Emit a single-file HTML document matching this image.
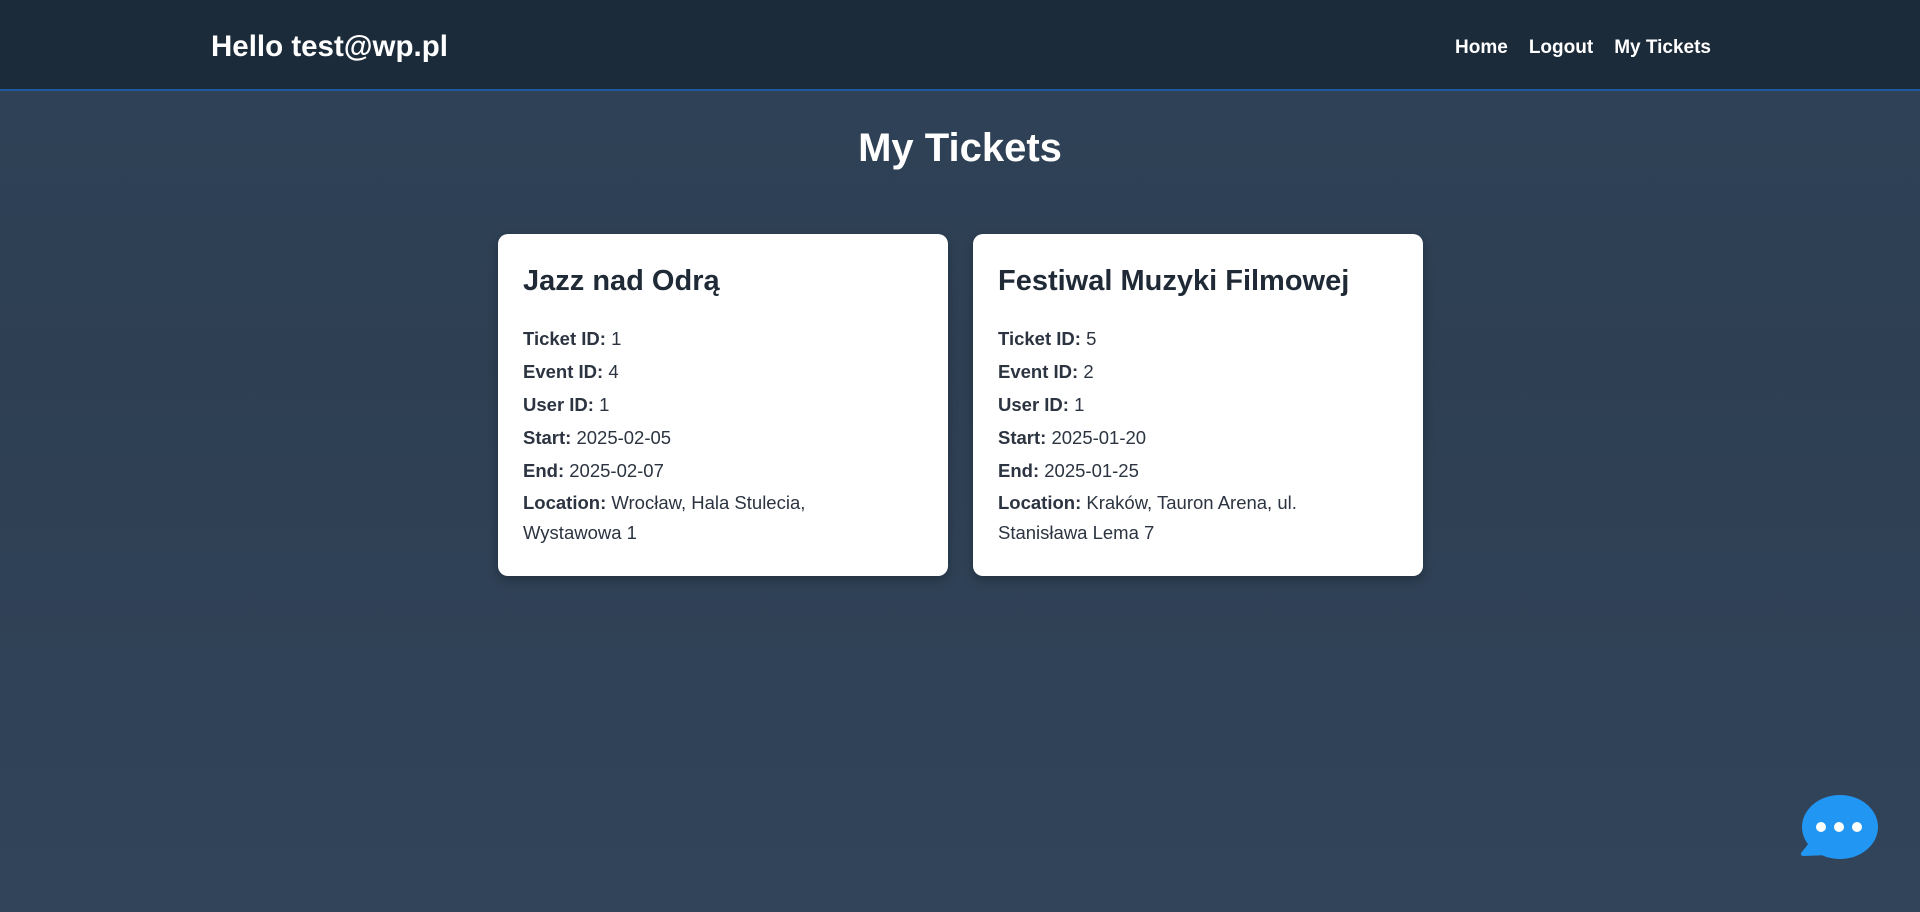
<!DOCTYPE html>
<html><head><meta charset="utf-8"><style>
*{margin:0;padding:0;box-sizing:border-box}
body{width:1920px;height:912px;overflow:hidden;font-family:"Liberation Sans",sans-serif;background:linear-gradient(180deg,#2f4257 0%,#2e3f53 40%,#31445a 100%);position:relative}
header{height:91px;background:#1c2b3a;border-bottom:2px solid #1f5aa0;position:relative}
.hello{position:absolute;left:211px;top:30px;color:#fff;font-weight:bold;font-size:29.5px}
nav{position:absolute;right:209px;top:37px;color:#fff;font-weight:bold;font-size:19px}
nav span{margin-left:21px}
h1{color:#fff;text-align:center;font-size:40px;font-weight:bold;position:absolute;top:126px;width:100%}
.card{position:absolute;top:234px;width:450px;height:342px;background:#fff;border-radius:10px;padding:31px 25px 28px;color:#2b3440;box-shadow:0 4px 10px rgba(0,0,0,.25)}
.card h2{font-size:29px;margin-bottom:24px;color:#1f2a36}
.card p{font-size:18.5px;line-height:33px}
.card p.l{line-height:30px;margin-top:1px}
.chat{position:absolute;left:1799px;top:793px}
</style></head><body>
<header><div class="hello">Hello test@wp.pl</div><nav><span>Home</span><span>Logout</span><span>My Tickets</span></nav></header>
<h1>My Tickets</h1>
<div class="card" style="left:498px"><h2>Jazz nad Odrą</h2>
<p><b>Ticket ID:</b> 1</p><p><b>Event ID:</b> 4</p><p><b>User ID:</b> 1</p><p><b>Start:</b> 2025-02-05</p><p><b>End:</b> 2025-02-07</p><p class="l"><b>Location:</b> Wrocław, Hala Stulecia,<br>Wystawowa 1</p></div>
<div class="card" style="left:973px"><h2>Festiwal Muzyki Filmowej</h2>
<p><b>Ticket ID:</b> 5</p><p><b>Event ID:</b> 2</p><p><b>User ID:</b> 1</p><p><b>Start:</b> 2025-01-20</p><p><b>End:</b> 2025-01-25</p><p class="l"><b>Location:</b> Kraków, Tauron Arena, ul.<br>Stanisława Lema 7</p></div>
<svg class="chat" width="80" height="70" viewBox="0 0 80 70"><ellipse cx="41" cy="34" rx="38" ry="32" fill="#2196f3"/><path d="M10 50 L2 60 Q1 63 5 63 L30 62 Z" fill="#2196f3"/><circle cx="22" cy="34" r="5" fill="#fff"/><circle cx="40" cy="34" r="5" fill="#fff"/><circle cx="58" cy="34" r="5" fill="#fff"/></svg>
</body></html>
